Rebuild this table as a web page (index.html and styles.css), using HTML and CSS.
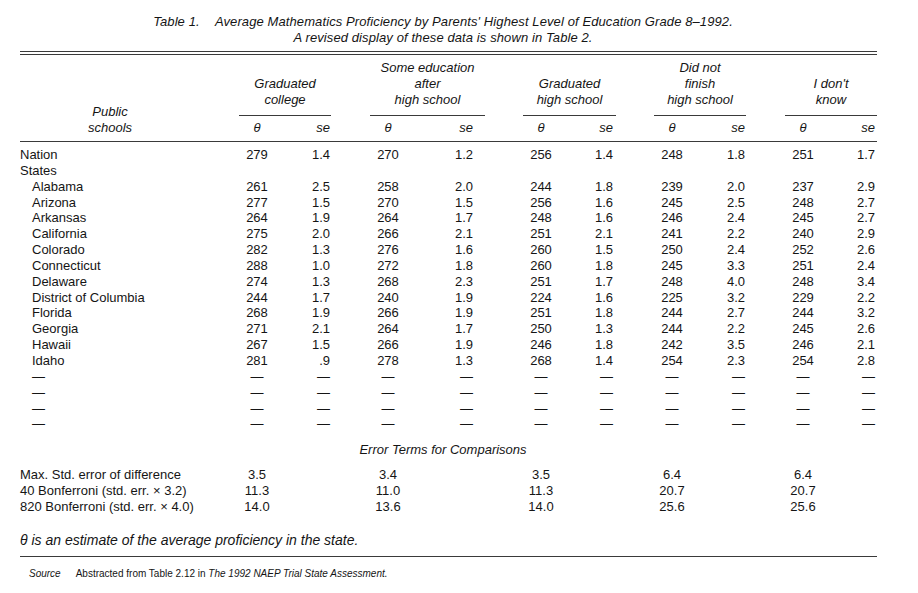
FILE: index.html
```html
<!DOCTYPE html>
<html lang="en">
<head>
<meta charset="utf-8">
<title>Table 1</title>
<link rel="stylesheet" href="styles.css">
</head>
<body>
<div class="page">
  <div class="title">
    <div><span class="tno">Table 1.</span> Average Mathematics Proficiency by Parents' Highest Level of Education Grade 8–1992.</div>
    <div>A revised display of these data is shown in Table 2.</div>
  </div>
  <div class="double-rule"></div>
  <table class="data">
    <colgroup>
      <col class="c-stub">
      <col class="c-t"><col class="c-s1">
      <col class="c-gap39">
      <col class="c-t"><col class="c-s2">
      <col class="c-gap38">
      <col class="c-t"><col class="c-s3">
      <col class="c-gap38">
      <col class="c-t"><col class="c-s1">
      <col class="c-gap39">
      <col class="c-t"><col class="c-s1">
    </colgroup>
    <thead>
      <tr class="grp-row">
        <th class="stub-head" rowspan="2">Public<br>schools</th>
        <th class="grp" colspan="2">Graduated<br>college</th>
        <th class="gap"></th>
        <th class="grp" colspan="2">Some education<br>after<br>high school</th>
        <th class="gap"></th>
        <th class="grp" colspan="2">Graduated<br>high school</th>
        <th class="gap"></th>
        <th class="grp" colspan="2">Did not<br>finish<br>high school</th>
        <th class="gap"></th>
        <th class="grp" colspan="2">I don't<br>know</th>
      </tr>
      <tr class="sub-row">
        <th class="t">θ</th><th class="s">se</th><th class="gap"></th>
        <th class="t">θ</th><th class="s pr12">se</th><th class="gap"></th>
        <th class="t">θ</th><th class="s pr3">se</th><th class="gap"></th>
        <th class="t">θ</th><th class="s">se</th><th class="gap"></th>
        <th class="t">θ</th><th class="s pr2">se</th>
      </tr>
    </thead>
    <tbody class="rows">
      <tr class="first"><td class="lab">Nation</td><td>279</td><td>1.4</td><td></td><td>270</td><td>1.2</td><td></td><td>256</td><td>1.4</td><td></td><td>248</td><td>1.8</td><td></td><td>251</td><td>1.7</td></tr>
      <tr><td class="lab">States</td><td></td><td></td><td></td><td></td><td></td><td></td><td></td><td></td><td></td><td></td><td></td><td></td><td></td><td></td></tr>
      <tr><td class="lab in">Alabama</td><td>261</td><td>2.5</td><td></td><td>258</td><td>2.0</td><td></td><td>244</td><td>1.8</td><td></td><td>239</td><td>2.0</td><td></td><td>237</td><td>2.9</td></tr>
      <tr><td class="lab in">Arizona</td><td>277</td><td>1.5</td><td></td><td>270</td><td>1.5</td><td></td><td>256</td><td>1.6</td><td></td><td>245</td><td>2.5</td><td></td><td>248</td><td>2.7</td></tr>
      <tr><td class="lab in">Arkansas</td><td>264</td><td>1.9</td><td></td><td>264</td><td>1.7</td><td></td><td>248</td><td>1.6</td><td></td><td>246</td><td>2.4</td><td></td><td>245</td><td>2.7</td></tr>
      <tr><td class="lab in">California</td><td>275</td><td>2.0</td><td></td><td>266</td><td>2.1</td><td></td><td>251</td><td>2.1</td><td></td><td>241</td><td>2.2</td><td></td><td>240</td><td>2.9</td></tr>
      <tr><td class="lab in">Colorado</td><td>282</td><td>1.3</td><td></td><td>276</td><td>1.6</td><td></td><td>260</td><td>1.5</td><td></td><td>250</td><td>2.4</td><td></td><td>252</td><td>2.6</td></tr>
      <tr><td class="lab in">Connecticut</td><td>288</td><td>1.0</td><td></td><td>272</td><td>1.8</td><td></td><td>260</td><td>1.8</td><td></td><td>245</td><td>3.3</td><td></td><td>251</td><td>2.4</td></tr>
      <tr><td class="lab in">Delaware</td><td>274</td><td>1.3</td><td></td><td>268</td><td>2.3</td><td></td><td>251</td><td>1.7</td><td></td><td>248</td><td>4.0</td><td></td><td>248</td><td>3.4</td></tr>
      <tr><td class="lab in">District of Columbia</td><td>244</td><td>1.7</td><td></td><td>240</td><td>1.9</td><td></td><td>224</td><td>1.6</td><td></td><td>225</td><td>3.2</td><td></td><td>229</td><td>2.2</td></tr>
      <tr><td class="lab in">Florida</td><td>268</td><td>1.9</td><td></td><td>266</td><td>1.9</td><td></td><td>251</td><td>1.8</td><td></td><td>244</td><td>2.7</td><td></td><td>244</td><td>3.2</td></tr>
      <tr><td class="lab in">Georgia</td><td>271</td><td>2.1</td><td></td><td>264</td><td>1.7</td><td></td><td>250</td><td>1.3</td><td></td><td>244</td><td>2.2</td><td></td><td>245</td><td>2.6</td></tr>
      <tr><td class="lab in">Hawaii</td><td>267</td><td>1.5</td><td></td><td>266</td><td>1.9</td><td></td><td>246</td><td>1.8</td><td></td><td>242</td><td>3.5</td><td></td><td>246</td><td>2.1</td></tr>
      <tr><td class="lab in">Idaho</td><td>281</td><td>.9</td><td></td><td>278</td><td>1.3</td><td></td><td>268</td><td>1.4</td><td></td><td>254</td><td>2.3</td><td></td><td>254</td><td>2.8</td></tr>
      <tr><td class="lab in">—</td><td>—</td><td>—</td><td></td><td>—</td><td>—</td><td></td><td>—</td><td>—</td><td></td><td>—</td><td>—</td><td></td><td>—</td><td>—</td></tr>
      <tr><td class="lab in">—</td><td>—</td><td>—</td><td></td><td>—</td><td>—</td><td></td><td>—</td><td>—</td><td></td><td>—</td><td>—</td><td></td><td>—</td><td>—</td></tr>
      <tr><td class="lab in">—</td><td>—</td><td>—</td><td></td><td>—</td><td>—</td><td></td><td>—</td><td>—</td><td></td><td>—</td><td>—</td><td></td><td>—</td><td>—</td></tr>
      <tr><td class="lab in">—</td><td>—</td><td>—</td><td></td><td>—</td><td>—</td><td></td><td>—</td><td>—</td><td></td><td>—</td><td>—</td><td></td><td>—</td><td>—</td></tr>
    </tbody>
    <tbody class="errs">
      <tr class="err-head"><td colspan="15">Error Terms for Comparisons</td></tr>
      <tr class="first"><td class="lab">Max. Std. error of difference</td><td>3.5</td><td></td><td></td><td>3.4</td><td></td><td></td><td>3.5</td><td></td><td></td><td>6.4</td><td></td><td></td><td>6.4</td><td></td></tr>
      <tr><td class="lab">40 Bonferroni (std. err. × 3.2)</td><td>11.3</td><td></td><td></td><td>11.0</td><td></td><td></td><td>11.3</td><td></td><td></td><td>20.7</td><td></td><td></td><td>20.7</td><td></td></tr>
      <tr><td class="lab">820 Bonferroni (std. err. × 4.0)</td><td>14.0</td><td></td><td></td><td>13.6</td><td></td><td></td><td>14.0</td><td></td><td></td><td>25.6</td><td></td><td></td><td>25.6</td><td></td></tr>
    </tbody>
  </table>
  <p class="note"><i>θ is an estimate of the average proficiency in the state.</i></p>
  <div class="source"><span class="src-label">Source</span>Abstracted from Table 2.12 in <i>The 1992 NAEP Trial State Assessment.</i></div>
</div>
</body>
</html>
```
FILE: styles.css
```css
html, body {
  margin: 0;
  padding: 0;
  background: #ffffff;
}

body {
  font-family: "Liberation Sans", Arial, sans-serif;
  font-size: 13px;
  color: #151515;
}

.page {
  width: 857px;
  padding: 14px 41px 0 20px;
}

.title {
  font-style: italic;
  text-align: center;
  line-height: 16px;
  padding-right: 11px;
  letter-spacing: 0.1px;
}

.tno {
  margin-right: 12px;
}

.double-rule {
  margin-top: 5px;
  height: 2px;
  border-top: 1px solid #3a3a3a;
  border-bottom: 1px solid #3a3a3a;
}

.data {
  width: 857px;
  table-layout: fixed;
  border-collapse: collapse;
  border-spacing: 0;
}

.c-stub { width: 219px; }
.c-t { width: 36px; }
.c-s1 { width: 56px; }
.c-s2 { width: 79px; }
.c-s3 { width: 57px; }
.c-gap39 { width: 39px; }
.c-gap38 { width: 38px; }

.data th,
.data td {
  padding: 0;
  font-weight: normal;
}

.data th {
  font-style: italic;
  line-height: 16px;
}

.grp-row th {
  padding-top: 5px;
  padding-bottom: 7px;
  vertical-align: bottom;
}

.grp-row th.grp {
  text-align: center;
  border-bottom: 1px solid #3a3a3a;
}

.data .grp-row th.stub-head {
  text-align: center;
  vertical-align: bottom;
  padding: 0 39px 5px 0;
  border-bottom: 1px solid #3a3a3a;
}

.sub-row th {
  padding-top: 4px;
  padding-bottom: 5px;
  border-bottom: 1px solid #3a3a3a;
}

.sub-row th.t {
  text-align: center;
}

.sub-row th.s {
  text-align: right;
  padding-right: 1px;
}

.sub-row th.pr12 { padding-right: 12px; }
.sub-row th.pr3 { padding-right: 3px; }
.sub-row th.pr2 { padding-right: 2px; }

.rows td {
  line-height: 15.85px;
  white-space: nowrap;
}

.rows tr.first td {
  padding-top: 5px;
}

.data td.lab {
  text-align: left;
}

.data td.in {
  padding-left: 12px;
}

/* theta columns */
.data tbody td:nth-child(2),
.data tbody td:nth-child(5),
.data tbody td:nth-child(8),
.data tbody td:nth-child(11),
.data tbody td:nth-child(14) {
  text-align: center;
}

/* se columns */
.rows td:nth-child(3),
.rows td:nth-child(6),
.rows td:nth-child(9),
.rows td:nth-child(12),
.rows td:nth-child(15) {
  text-align: right;
  padding-right: 1px;
}

.rows td:nth-child(6) { padding-right: 12px; }
.rows td:nth-child(9) { padding-right: 3px; }
.rows td:nth-child(15) { padding-right: 2px; }

.errs td {
  line-height: 16px;
  white-space: nowrap;
}

.errs tr.err-head td {
  padding-top: 10px;
  font-style: italic;
  text-align: center;
  padding-right: 11px;
}

.errs tr.first td {
  padding-top: 9px;
}

.note {
  margin: 17px 0 0 0;
  font-size: 14px;
  line-height: 16px;
  padding-bottom: 8px;
  border-bottom: 1px solid #3a3a3a;
}

.source {
  margin-top: 11px;
  padding-left: 9px;
  font-size: 10px;
  line-height: 12px;
}

.src-label {
  font-style: italic;
  margin-right: 15px;
}
```
